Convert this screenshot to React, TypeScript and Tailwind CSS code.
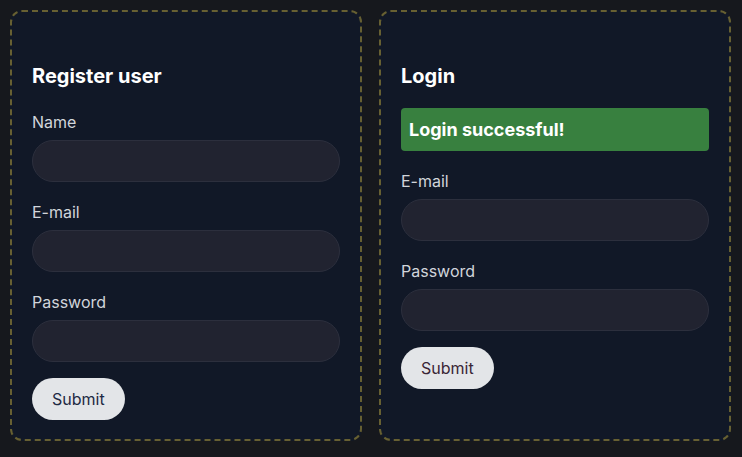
import React from "react";

function Field({ label }: { label: string }) {
  return (
    <div className="flex flex-col">
      <label className="text-base leading-6 text-[#d1d5db]">{label}</label>
      <input
        className="mt-1.5 h-[42px] w-full rounded-full border border-[#2c2f3d] bg-[#212330] px-4 text-base text-white outline-none"
        type="text"
      />
    </div>
  );
}

export default function App() {
  return (
    <div
      className="flex h-[457px] w-[742px] gap-[17px] bg-[#16181d] pb-[16px] pl-[10px] pr-[11px] pt-[10px]"
      style={{ fontFamily: "Inter, 'Noto Sans', sans-serif" }}
    >
      <div className="flex flex-1 flex-col rounded-xl border-2 border-dashed border-[#676032] bg-[#111827] px-5 pb-5 pt-[50px]">
        <h2 className="mb-5 text-xl font-bold leading-7 text-white">Register user</h2>
        <div className="flex flex-col gap-[18px]">
          <Field label="Name" />
          <Field label="E-mail" />
          <Field label="Password" />
        </div>
        <div className="mt-4">
          <button className="h-[42px] rounded-full bg-[#e3e5e8] px-5 text-base text-[#1e2a44]">
            Submit
          </button>
        </div>
      </div>
      <div className="flex flex-1 flex-col rounded-xl border-2 border-dashed border-[#676032] bg-[#111827] px-5 pb-5 pt-[50px]">
        <h2 className="mb-[18px] text-xl font-bold leading-7 text-white">Login</h2>
        <div className="mb-[18px] rounded bg-[#38803f] p-2 text-lg font-bold leading-[27px] text-white">
          Login successful!
        </div>
        <div className="flex flex-col gap-[18px]">
          <Field label="E-mail" />
          <Field label="Password" />
        </div>
        <div className="mt-4">
          <button className="h-[42px] rounded-full bg-[#e3e5e8] px-5 text-base text-[#3a2636]">
            Submit
          </button>
        </div>
      </div>
    </div>
  );
}
